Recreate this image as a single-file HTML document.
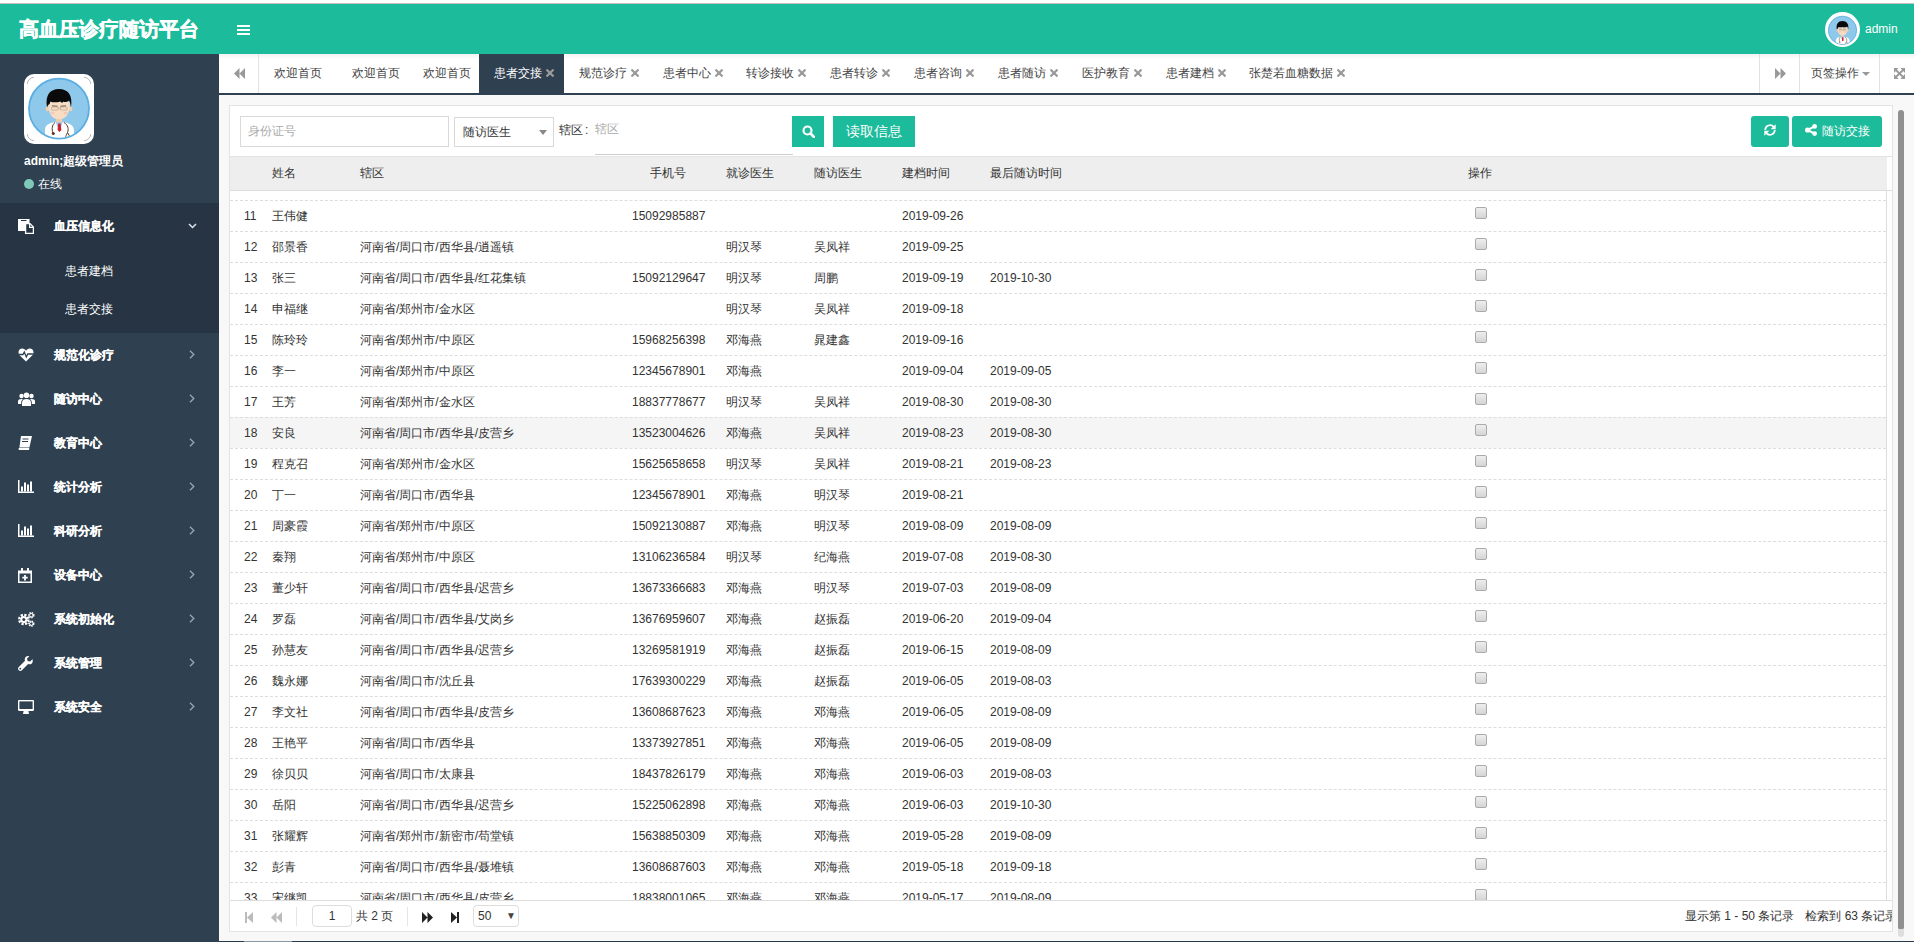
<!DOCTYPE html>
<html><head><meta charset="utf-8">
<style>
*{box-sizing:border-box;margin:0;padding:0}
html,body{width:1914px;height:942px;overflow:hidden;background:#fff;font-family:"Liberation Sans",sans-serif;font-size:12px;color:#333}
.abs{position:absolute}
#topline{position:absolute;left:0;top:3px;width:1914px;height:1px;background:#c9bfbf}
#header{position:absolute;left:0;top:4px;width:1914px;height:50px;background:#1cbb9b}
#title{position:absolute;left:19px;top:10px;font-size:20px;font-weight:bold;-webkit-text-stroke:0.5px #fff;color:#fff;line-height:30px;white-space:nowrap}
#burger{position:absolute;left:237px;top:21px;width:13px;height:10px}
#burger i{position:absolute;left:0;width:13px;height:2px;background:#fff}
#havatar{position:absolute;left:1825px;top:8px;width:35px;height:35px;border-radius:50%;background:#fff;overflow:hidden}
#hname{position:absolute;left:1865px;top:17px;color:#fff;font-size:12px;line-height:16px}

#sidebar{position:absolute;left:0;top:54px;width:219px;height:888px;background:#2f4050}
#avbox{position:absolute;left:24px;top:20px;width:70px;height:70px;border-radius:10px;background:#fff;overflow:hidden}
#uname{position:absolute;left:24px;top:99px;color:#fff;font-weight:bold;font-size:12px;line-height:16px;white-space:nowrap}
#online{position:absolute;left:24px;top:122px;color:#fff;font-size:12px;line-height:16px;white-space:nowrap}
#online i{display:inline-block;width:10px;height:10px;border-radius:50%;background:#7fc9b9;margin-right:4px;vertical-align:-1px}
#m1{position:absolute;left:0;top:149px;width:219px;height:130px;background:#263443}
.mi{position:absolute;left:0;width:219px;height:44px;color:#fff}
.mi .ico{position:absolute;left:18px;top:16px;width:18px;height:16px}
.mi .ico svg{display:block}
.mi .mt{position:absolute;left:54px;top:15px;font-weight:bold;-webkit-text-stroke:0.2px #fff;font-size:12px;line-height:16px;white-space:nowrap}
.mi .arr{position:absolute;left:189px;top:18px}
.sub{position:absolute;left:65px;color:#fff;font-size:12px;line-height:16px;white-space:nowrap}

#tabbar{position:absolute;left:219px;top:54px;width:1695px;height:41px;background:linear-gradient(#fbf3f3 0,#f4f4f4 1px,#fafafa 3px,#fff 5px);border-bottom:2px solid #2f4050}
.tab{position:absolute;top:0;height:39px;line-height:39px;font-size:12px;color:#444;white-space:nowrap}
.tab .x{margin-left:4px;vertical-align:0px}
.tab.act{color:#fff;background:#2f4050;padding:0 10px 0 15px;margin-left:-15px}

.sep{position:absolute;top:0;width:1px;height:39px;background:#e2e2e2}

#content{position:absolute;left:219px;top:95px;width:1695px;height:846px;background:#f8f8f8}
#bottomline{position:absolute;left:219px;top:941px;width:1695px;height:1px;background:#2a3a4a}
#panel{position:absolute;left:229px;top:105px;width:1664px;height:827px;background:#fff;border:1px solid #e3e3e3}
#toolbar{position:absolute;left:0;top:0;width:1662px;height:51px;border-bottom:1px solid #e3e3e3}
.inp{position:absolute;border:1px solid #d9d9d9;background:#fff;font-size:12px;line-height:28px;color:#aaa;padding-left:7px}
.btn{position:absolute;background:#1cbb9b;color:#fff;border-radius:3px;font-size:12px;text-align:center}
#thead{position:absolute;left:0;top:51px;width:1662px;height:34px;border-bottom:1px solid #ddd}
#thead .bg{position:absolute;left:0;top:0;width:1657px;height:33px;background:#eee}
.th{position:absolute;top:8px;font-size:12px;line-height:16px;color:#333;white-space:nowrap}
#tbody{position:absolute;left:0;top:85px;width:1657px;height:709px;overflow:hidden;border-right:1px solid #ddd}
.tr{position:absolute;left:0;width:1656px;height:31px;border-top:1px dashed #ddd}
.tr.hl{background:#f5f5f5}
.tr .c{position:absolute;top:7px;line-height:16px;white-space:nowrap;color:#333}
.cb{position:absolute;left:1245px;top:6px;width:12px;height:12px;border:1px solid #aaa;border-radius:2px;background:linear-gradient(#eee,#d5d5d5)}
#tfoot{position:absolute;left:0;top:794px;width:1662px;height:31px;border-top:1px solid #ddd;overflow:hidden}
#scroll{position:absolute;left:1898px;top:110px;width:6px;height:820px;border-radius:3px;background:#909090}
</style></head>
<body>
<svg width="0" height="0" style="position:absolute"><defs><clipPath id="cc"><circle cx="35" cy="34.6" r="29.1"/></clipPath>
<symbol id="av" viewBox="0 0 70 70">
 <circle cx="35" cy="34.6" r="30" fill="#8ec8ea" stroke="#5aaee2" stroke-width="1.8"/>
 <g clip-path="url(#cc)">
  <path d="M21 70V56C21 51 25 49 31 48.2H39C45 49 49.5 51 50 56V70z" fill="#fff"/>
  <path d="M31.5 47h7.5l-1.8 6h-3.9z" fill="#a9c6ea"/>
  <path d="M34.2 49.5h2.4l0.8 6.5-1.9 2-1.9-2z" fill="#c8202e"/>
  <path d="M31 48.5C28 51 27.5 55 29 59" stroke="#5a3526" fill="none" stroke-width="1"/>
  <circle cx="29.3" cy="59.6" r="1.5" fill="#5a3526"/>
  <path d="M40 48.5C44 51 45 55 43.5 58.5C42.5 61 41.5 62 41.5 64" stroke="#5a3526" fill="none" stroke-width="1"/>
  <path d="M43.5 58.5 45.5 62" stroke="#5a3526" fill="none" stroke-width="1"/>
 </g>
 <rect x="32" y="41" width="6" height="7" fill="#f0c9a8"/>
 <ellipse cx="23.3" cy="35" rx="1.7" ry="2.4" fill="#f3cfb0"/>
 <ellipse cx="46.7" cy="35" rx="1.7" ry="2.4" fill="#f3cfb0"/>
 <path d="M24 28C24 40 28 45.2 35 45.2C42 45.2 46 40 46 28z" fill="#f8dcc3"/>
 <ellipse cx="28.5" cy="39" rx="2" ry="1.2" fill="#f6c6b6"/>
 <ellipse cx="41.5" cy="39" rx="2" ry="1.2" fill="#f6c6b6"/>
 <path d="M23 33.5C21 21 26 15 35 15C44 15 49 21 47 33.5C46.5 30 46 28 45 26.5C43 28 41 28.5 39.5 27.5L38 29 36.5 27.5C33 28.5 29 28.8 26.5 27.5L25.5 30C24.5 30.5 23.5 31.5 23 33.5z" fill="#0a0a0a"/>
 <path d="M27.5 33h6.5v3h-6.5zM36.5 33h6.5v3h-6.5z" fill="none" stroke="#9a8a7a" stroke-width="0.45"/>
 <path d="M34 34.2h2.5" stroke="#9a8a7a" stroke-width="0.45"/><path d="M28 31.8l5.5 0.4M36.5 32.2l5.5-0.4" stroke="#333" stroke-width="0.7"/>
 <path d="M3.3 10A7 7 0 0 1 10 3.3M60 3.3A7 7 0 0 1 66.7 10M66.7 60A7 7 0 0 1 60 66.7M10 66.7A7 7 0 0 1 3.3 60" fill="none" stroke="#888" stroke-width="0.6"/>
</symbol></defs></svg>
<div id="topline"></div>
<div id="header">
  <div id="title">高血压诊疗随访平台</div>
  <div id="burger"><i style="top:0"></i><i style="top:4px"></i><i style="top:8px"></i></div>
  <div id="havatar"><svg style="position:absolute;left:1px;top:1.5px" width="33" height="33" viewBox="0 0 70 70"><use href="#av" width="70" height="70"/></svg></div>
  <div id="hname">admin</div>
</div>

<div id="sidebar">
  <div id="avbox"><svg width="70" height="70" viewBox="0 0 70 70"><use href="#av"/></svg></div>
  <div id="uname">admin;超级管理员</div>
  <div id="online"><i></i>在线</div>
  <div id="m1"></div>
  <div class="mi" style="top:149px"><span class="ico"><svg width="16" height="15" viewBox="0 0 16 15"><path d="M0 0h11.5v4H7v8H0z" fill="#fff"/><path d="M3 1.5h5.5" stroke="#263443" stroke-width="1"/><path d="M7.6 4.6H12l3.4 3.4v6.4H7.6z" fill="#263443" stroke="#fff" stroke-width="1.3"/><path d="M11.6 4.6v3.8h3.8" fill="none" stroke="#fff" stroke-width="1.2"/></svg></span><span class="mt">血压信息化</span><svg style="position:absolute;left:188px;top:20px" width="9" height="6" viewBox="0 0 9 6"><path d="M1 1l3.5 3.5L8 1" fill="none" stroke="#dfe4ea" stroke-width="1.5"/></svg></div>
  <div class="sub" style="top:209px">患者建档</div>
  <div class="sub" style="top:247px">患者交接</div>
<div class="mi" style="top:278px"><span class="ico"><svg width="16" height="14" viewBox="0 0 16 14"><path d="M8 13.5L1.6 7.2C-0.4 5.2 0.3 1 3.8 0.6 5.7 0.4 7 1.5 8 2.7 9 1.5 10.3 0.4 12.2 0.6c3.5 0.4 4.2 4.6 2.2 6.6z" fill="#fff"/><path d="M0.5 6.5h4.5l1.3-2.5 2 5 1.5-3h5.7" fill="none" stroke="#2f4050" stroke-width="1.3"/></svg></span><span class="mt">规范化诊疗</span><svg class="arr" width="6" height="9" viewBox="0 0 6 9"><path d="M1 0.8L4.8 4.5 1 8.2" fill="none" stroke="#98a2ad" stroke-width="1.4"/></svg></div>
<div class="mi" style="top:322px"><span class="ico"><svg width="17" height="14" viewBox="0 0 17 14"><circle cx="8.5" cy="3.2" r="2.8" fill="#fff"/><circle cx="3.5" cy="4" r="2.2" fill="#fff"/><circle cx="13.5" cy="4" r="2.2" fill="#fff"/><path d="M4 14v-3.5C4 8 6 7 8.5 7S13 8 13 10.5V14z" fill="#fff"/><path d="M0 12V9.2C0 7.8 1.5 7 3.5 7 4 7 4.5 7.1 4.8 7.2 3.8 8 3.2 9 3.2 10.5V12zM17 12V9.2C17 7.8 15.5 7 13.5 7 13 7 12.5 7.1 12.2 7.2 13.2 8 13.8 9 13.8 10.5V12z" fill="#fff"/></svg></span><span class="mt">随访中心</span><svg class="arr" width="6" height="9" viewBox="0 0 6 9"><path d="M1 0.8L4.8 4.5 1 8.2" fill="none" stroke="#98a2ad" stroke-width="1.4"/></svg></div>
<div class="mi" style="top:366px"><span class="ico"><svg width="14" height="14" viewBox="0 0 14 14"><path d="M3 0h11l-2.5 11H1.5z" fill="#fff"/><path d="M1.5 11.5h10L11 14H1.5C0.5 14 0.3 13 0.8 12z" fill="#fff"/><path d="M4.5 3h6M4 5.5h6" stroke="#2f4050" stroke-width="1"/></svg></span><span class="mt">教育中心</span><svg class="arr" width="6" height="9" viewBox="0 0 6 9"><path d="M1 0.8L4.8 4.5 1 8.2" fill="none" stroke="#98a2ad" stroke-width="1.4"/></svg></div>
<div class="mi" style="top:410px"><span class="ico"><svg width="16" height="13" viewBox="0 0 16 13"><path d="M0.75 0v12.25H16" fill="none" stroke="#fff" stroke-width="1.5"/><rect x="3" y="6.5" width="2" height="5" fill="#fff"/><rect x="6" y="2.5" width="2" height="9" fill="#fff"/><rect x="9" y="4.5" width="2" height="7" fill="#fff"/><rect x="12" y="1.5" width="2" height="10" fill="#fff"/></svg></span><span class="mt">统计分析</span><svg class="arr" width="6" height="9" viewBox="0 0 6 9"><path d="M1 0.8L4.8 4.5 1 8.2" fill="none" stroke="#98a2ad" stroke-width="1.4"/></svg></div>
<div class="mi" style="top:454px"><span class="ico"><svg width="16" height="13" viewBox="0 0 16 13"><path d="M0.75 0v12.25H16" fill="none" stroke="#fff" stroke-width="1.5"/><rect x="3" y="6.5" width="2" height="5" fill="#fff"/><rect x="6" y="2.5" width="2" height="9" fill="#fff"/><rect x="9" y="4.5" width="2" height="7" fill="#fff"/><rect x="12" y="1.5" width="2" height="10" fill="#fff"/></svg></span><span class="mt">科研分析</span><svg class="arr" width="6" height="9" viewBox="0 0 6 9"><path d="M1 0.8L4.8 4.5 1 8.2" fill="none" stroke="#98a2ad" stroke-width="1.4"/></svg></div>
<div class="mi" style="top:498px"><span class="ico"><svg width="14" height="15" viewBox="0 0 14 15"><path d="M0 2.5h14V15H0z" fill="#fff"/><rect x="1.5" y="5.5" width="11" height="8" fill="#2f4050"/><rect x="3" y="0" width="2" height="3.5" fill="#fff"/><rect x="9" y="0" width="2" height="3.5" fill="#fff"/><path d="M7 7v5.5M4.3 9.7h5.4" stroke="#fff" stroke-width="1.8"/></svg></span><span class="mt">设备中心</span><svg class="arr" width="6" height="9" viewBox="0 0 6 9"><path d="M1 0.8L4.8 4.5 1 8.2" fill="none" stroke="#98a2ad" stroke-width="1.4"/></svg></div>
<div class="mi" style="top:542px"><span class="ico"><svg width="17" height="15" viewBox="0 0 17 15"><circle cx="5.8" cy="7.5" r="4.6" fill="none" stroke="#fff" stroke-width="2.4" stroke-dasharray="2.2 1.4"/><circle cx="5.8" cy="7.5" r="3.6" fill="#fff"/><circle cx="5.8" cy="7.5" r="1.5" fill="#2f4050"/><circle cx="13.3" cy="3.2" r="2.4" fill="none" stroke="#fff" stroke-width="1.6" stroke-dasharray="1.3 0.8"/><circle cx="13.3" cy="3.2" r="1.7" fill="none" stroke="#fff" stroke-width="1"/><circle cx="13.3" cy="11.6" r="2.4" fill="none" stroke="#fff" stroke-width="1.6" stroke-dasharray="1.3 0.8"/><circle cx="13.3" cy="11.6" r="1.7" fill="none" stroke="#fff" stroke-width="1"/></svg></span><span class="mt">系统初始化</span><svg class="arr" width="6" height="9" viewBox="0 0 6 9"><path d="M1 0.8L4.8 4.5 1 8.2" fill="none" stroke="#98a2ad" stroke-width="1.4"/></svg></div>
<div class="mi" style="top:586px"><span class="ico"><svg width="15" height="15" viewBox="0 0 15 15"><path d="M14.5 3.3 12 5.6 9.6 5 9 2.6 11.3 0.2C9.3-0.4 7 0.7 6.8 3c-0.1 0.8 0 1.3 0.2 1.8L0.8 11c-1 1-1 2.3 0 3.2 0.9 0.9 2.2 0.9 3.1 0l6.2-6.2c2.7 1.1 5.5-0.9 4.4-4.7z" fill="#fff"/><circle cx="2.3" cy="12.7" r="0.9" fill="#2f4050"/></svg></span><span class="mt">系统管理</span><svg class="arr" width="6" height="9" viewBox="0 0 6 9"><path d="M1 0.8L4.8 4.5 1 8.2" fill="none" stroke="#98a2ad" stroke-width="1.4"/></svg></div>
<div class="mi" style="top:630px"><span class="ico"><svg width="16" height="14" viewBox="0 0 16 14"><path d="M1.2 0h13.6C15.5 0 16 0.5 16 1.2v8.6c0 0.7-0.5 1.2-1.2 1.2H1.2C0.5 11 0 10.5 0 9.8V1.2C0 0.5 0.5 0 1.2 0z" fill="#fff"/><rect x="1.4" y="1.4" width="13.2" height="7.6" fill="#2f4050"/><path d="M5 14h6l-0.6-3H5.6z" fill="#fff"/></svg></span><span class="mt">系统安全</span><svg class="arr" width="6" height="9" viewBox="0 0 6 9"><path d="M1 0.8L4.8 4.5 1 8.2" fill="none" stroke="#98a2ad" stroke-width="1.4"/></svg></div>

</div>

<div id="tabbar">
  <div class="abs" style="left:15px;top:14px"><svg width="11" height="11" viewBox="0 0 11 11"><path d="M5.5 0v11L0 5.5zM11 0v11L5.5 5.5z" fill="#999"/></svg></div>
  <div class="sep" style="left:39px"></div>
  <span class="tab" style="left:55px">欢迎首页</span><span class="tab" style="left:133px">欢迎首页</span><span class="tab" style="left:204px">欢迎首页</span><span class="tab act" style="left:275px">患者交接<svg class="x" width="8" height="8" viewBox="0 0 8 8"><path d="M1.2 1.2l5.6 5.6M6.8 1.2l-5.6 5.6" stroke="#9a9a9a" stroke-width="2.3" stroke-linecap="round"/></svg></span><span class="tab" style="left:360px">规范诊疗<svg class="x" width="8" height="8" viewBox="0 0 8 8"><path d="M1.2 1.2l5.6 5.6M6.8 1.2l-5.6 5.6" stroke="#9a9a9a" stroke-width="2.3" stroke-linecap="round"/></svg></span><span class="tab" style="left:444px">患者中心<svg class="x" width="8" height="8" viewBox="0 0 8 8"><path d="M1.2 1.2l5.6 5.6M6.8 1.2l-5.6 5.6" stroke="#9a9a9a" stroke-width="2.3" stroke-linecap="round"/></svg></span><span class="tab" style="left:527px">转诊接收<svg class="x" width="8" height="8" viewBox="0 0 8 8"><path d="M1.2 1.2l5.6 5.6M6.8 1.2l-5.6 5.6" stroke="#9a9a9a" stroke-width="2.3" stroke-linecap="round"/></svg></span><span class="tab" style="left:611px">患者转诊<svg class="x" width="8" height="8" viewBox="0 0 8 8"><path d="M1.2 1.2l5.6 5.6M6.8 1.2l-5.6 5.6" stroke="#9a9a9a" stroke-width="2.3" stroke-linecap="round"/></svg></span><span class="tab" style="left:695px">患者咨询<svg class="x" width="8" height="8" viewBox="0 0 8 8"><path d="M1.2 1.2l5.6 5.6M6.8 1.2l-5.6 5.6" stroke="#9a9a9a" stroke-width="2.3" stroke-linecap="round"/></svg></span><span class="tab" style="left:779px">患者随访<svg class="x" width="8" height="8" viewBox="0 0 8 8"><path d="M1.2 1.2l5.6 5.6M6.8 1.2l-5.6 5.6" stroke="#9a9a9a" stroke-width="2.3" stroke-linecap="round"/></svg></span><span class="tab" style="left:863px">医护教育<svg class="x" width="8" height="8" viewBox="0 0 8 8"><path d="M1.2 1.2l5.6 5.6M6.8 1.2l-5.6 5.6" stroke="#9a9a9a" stroke-width="2.3" stroke-linecap="round"/></svg></span><span class="tab" style="left:947px">患者建档<svg class="x" width="8" height="8" viewBox="0 0 8 8"><path d="M1.2 1.2l5.6 5.6M6.8 1.2l-5.6 5.6" stroke="#9a9a9a" stroke-width="2.3" stroke-linecap="round"/></svg></span><span class="tab" style="left:1030px">张楚若血糖数据<svg class="x" width="8" height="8" viewBox="0 0 8 8"><path d="M1.2 1.2l5.6 5.6M6.8 1.2l-5.6 5.6" stroke="#9a9a9a" stroke-width="2.3" stroke-linecap="round"/></svg></span>
  <div class="sep" style="left:1540px"></div>
  <div class="abs" style="left:1556px;top:14px"><svg width="11" height="11" viewBox="0 0 11 11"><path d="M0 0v11L5.5 5.5zM5.5 0v11L11 5.5z" fill="#999"/></svg></div>
  <div class="sep" style="left:1580px"></div>
  <div class="tab" style="left:1592px">页签操作<span style="display:inline-block;margin-left:3px;width:0;height:0;border-left:4px solid transparent;border-right:4px solid transparent;border-top:4px solid #999;vertical-align:1px"></span></div>
  <div class="sep" style="left:1660px"></div>
  <div class="abs" style="left:1675px;top:14px"><svg width="11" height="11" viewBox="0 0 12 11" preserveAspectRatio="none" fill="#9a9a9a"><path d="M0 0h5L0 5zM12 0v5L7 0zM0 11V6l5 5zM12 11H7l5-5z"/><path d="M1.5 1.5L10.5 9.5M10.5 1.5L1.5 9.5" stroke="#9a9a9a" stroke-width="2.2"/></svg></div>
</div>

<div id="content"></div>
<div id="bottomline"></div>
<div id="panel">
  <div id="toolbar">
    <div class="inp" style="left:10px;top:10px;width:209px;height:31px">身份证号</div>
    <div class="inp" style="left:224px;top:11px;width:100px;height:30px;color:#333;padding-left:8px;line-height:29px">随访医生<span style="position:absolute;left:84px;top:12px;width:0;height:0;border-left:4px solid transparent;border-right:4px solid transparent;border-top:5px solid #888"></span></div>
    <div class="abs" style="left:329px;top:16px;line-height:16px;color:#333">辖区<span style="margin-left:2px">:</span></div>
    <div class="abs" style="left:365px;top:15px;line-height:16px;color:#aaa">辖区</div>
    <div class="abs" style="left:365px;top:48px;width:198px;height:1px;background:#ccc"></div>
    <div class="btn" style="left:562px;top:10px;width:32px;height:31px;border-radius:0"><svg style="margin-top:9px" width="13" height="13" viewBox="0 0 13 13"><circle cx="5.5" cy="5.5" r="4" fill="none" stroke="#fff" stroke-width="2.2"/><path d="M8.5 8.5l3.5 3.5" stroke="#fff" stroke-width="2.6" stroke-linecap="round"/></svg></div>
    <div class="btn" style="left:603px;top:10px;width:82px;height:31px;line-height:31px;border-radius:0;font-size:14px">读取信息</div>
    <div class="btn" style="left:1521px;top:10px;width:38px;height:31px"><svg style="position:absolute;left:13px;top:8px" width="12" height="12" viewBox="0 0 12 12"><path d="M1.2 6A4.8 4.8 0 0 1 9.7 2.9" fill="none" stroke="#fff" stroke-width="1.7"/><path d="M11.7 0.2V5.2H6.7z" fill="#fff"/><path d="M10.8 6A4.8 4.8 0 0 1 2.3 9.1" fill="none" stroke="#fff" stroke-width="1.7"/><path d="M0.3 11.8V6.8H5.3z" fill="#fff"/></svg></div>
    <div class="btn" style="left:1562px;top:10px;width:90px;height:31px;line-height:31px"><svg style="vertical-align:-1px;margin-right:5px" width="12" height="12" viewBox="0 0 12 12"><circle cx="9.6" cy="2.4" r="2.4" fill="#fff"/><circle cx="2.6" cy="6" r="2.6" fill="#fff"/><circle cx="9.6" cy="9.6" r="2.4" fill="#fff"/><path d="M2.6 6 9.6 2.4M2.6 6 9.6 9.6" stroke="#fff" stroke-width="2"/></svg>随访交接</div>
  </div>
  <div id="thead"><div class="bg"></div>
    <span class="th" style="left:42px">姓名</span>
    <span class="th" style="left:130px">辖区</span>
    <span class="th" style="left:420px">手机号</span>
    <span class="th" style="left:496px">就诊医生</span>
    <span class="th" style="left:584px">随访医生</span>
    <span class="th" style="left:672px">建档时间</span>
    <span class="th" style="left:760px">最后随访时间</span>
    <span class="th" style="left:1238px">操作</span>
  </div>
  <div id="tbody">
<div class="tr" style="top:9px"><span class="c" style="left:14px">11</span><span class="c" style="left:42px">王伟健</span><span class="c" style="left:402px">15092985887</span><span class="c" style="left:672px">2019-09-26</span><i class="cb"></i></div>
<div class="tr" style="top:40px"><span class="c" style="left:14px">12</span><span class="c" style="left:42px">邵景香</span><span class="c" style="left:130px">河南省/周口市/西华县/逍遥镇</span><span class="c" style="left:496px">明汉琴</span><span class="c" style="left:584px">吴凤祥</span><span class="c" style="left:672px">2019-09-25</span><i class="cb"></i></div>
<div class="tr" style="top:71px"><span class="c" style="left:14px">13</span><span class="c" style="left:42px">张三</span><span class="c" style="left:130px">河南省/周口市/西华县/红花集镇</span><span class="c" style="left:402px">15092129647</span><span class="c" style="left:496px">明汉琴</span><span class="c" style="left:584px">周鹏</span><span class="c" style="left:672px">2019-09-19</span><span class="c" style="left:760px">2019-10-30</span><i class="cb"></i></div>
<div class="tr" style="top:102px"><span class="c" style="left:14px">14</span><span class="c" style="left:42px">申福继</span><span class="c" style="left:130px">河南省/郑州市/金水区</span><span class="c" style="left:496px">明汉琴</span><span class="c" style="left:584px">吴凤祥</span><span class="c" style="left:672px">2019-09-18</span><i class="cb"></i></div>
<div class="tr" style="top:133px"><span class="c" style="left:14px">15</span><span class="c" style="left:42px">陈玲玲</span><span class="c" style="left:130px">河南省/郑州市/中原区</span><span class="c" style="left:402px">15968256398</span><span class="c" style="left:496px">邓海燕</span><span class="c" style="left:584px">晁建鑫</span><span class="c" style="left:672px">2019-09-16</span><i class="cb"></i></div>
<div class="tr" style="top:164px"><span class="c" style="left:14px">16</span><span class="c" style="left:42px">李一</span><span class="c" style="left:130px">河南省/郑州市/中原区</span><span class="c" style="left:402px">12345678901</span><span class="c" style="left:496px">邓海燕</span><span class="c" style="left:672px">2019-09-04</span><span class="c" style="left:760px">2019-09-05</span><i class="cb"></i></div>
<div class="tr" style="top:195px"><span class="c" style="left:14px">17</span><span class="c" style="left:42px">王芳</span><span class="c" style="left:130px">河南省/郑州市/金水区</span><span class="c" style="left:402px">18837778677</span><span class="c" style="left:496px">明汉琴</span><span class="c" style="left:584px">吴凤祥</span><span class="c" style="left:672px">2019-08-30</span><span class="c" style="left:760px">2019-08-30</span><i class="cb"></i></div>
<div class="tr hl" style="top:226px"><span class="c" style="left:14px">18</span><span class="c" style="left:42px">安良</span><span class="c" style="left:130px">河南省/周口市/西华县/皮营乡</span><span class="c" style="left:402px">13523004626</span><span class="c" style="left:496px">邓海燕</span><span class="c" style="left:584px">吴凤祥</span><span class="c" style="left:672px">2019-08-23</span><span class="c" style="left:760px">2019-08-30</span><i class="cb"></i></div>
<div class="tr" style="top:257px"><span class="c" style="left:14px">19</span><span class="c" style="left:42px">程克召</span><span class="c" style="left:130px">河南省/郑州市/金水区</span><span class="c" style="left:402px">15625658658</span><span class="c" style="left:496px">明汉琴</span><span class="c" style="left:584px">吴凤祥</span><span class="c" style="left:672px">2019-08-21</span><span class="c" style="left:760px">2019-08-23</span><i class="cb"></i></div>
<div class="tr" style="top:288px"><span class="c" style="left:14px">20</span><span class="c" style="left:42px">丁一</span><span class="c" style="left:130px">河南省/周口市/西华县</span><span class="c" style="left:402px">12345678901</span><span class="c" style="left:496px">邓海燕</span><span class="c" style="left:584px">明汉琴</span><span class="c" style="left:672px">2019-08-21</span><i class="cb"></i></div>
<div class="tr" style="top:319px"><span class="c" style="left:14px">21</span><span class="c" style="left:42px">周豪霞</span><span class="c" style="left:130px">河南省/郑州市/中原区</span><span class="c" style="left:402px">15092130887</span><span class="c" style="left:496px">邓海燕</span><span class="c" style="left:584px">明汉琴</span><span class="c" style="left:672px">2019-08-09</span><span class="c" style="left:760px">2019-08-09</span><i class="cb"></i></div>
<div class="tr" style="top:350px"><span class="c" style="left:14px">22</span><span class="c" style="left:42px">秦翔</span><span class="c" style="left:130px">河南省/郑州市/中原区</span><span class="c" style="left:402px">13106236584</span><span class="c" style="left:496px">明汉琴</span><span class="c" style="left:584px">纪海燕</span><span class="c" style="left:672px">2019-07-08</span><span class="c" style="left:760px">2019-08-30</span><i class="cb"></i></div>
<div class="tr" style="top:381px"><span class="c" style="left:14px">23</span><span class="c" style="left:42px">董少轩</span><span class="c" style="left:130px">河南省/周口市/西华县/迟营乡</span><span class="c" style="left:402px">13673366683</span><span class="c" style="left:496px">邓海燕</span><span class="c" style="left:584px">明汉琴</span><span class="c" style="left:672px">2019-07-03</span><span class="c" style="left:760px">2019-08-09</span><i class="cb"></i></div>
<div class="tr" style="top:412px"><span class="c" style="left:14px">24</span><span class="c" style="left:42px">罗磊</span><span class="c" style="left:130px">河南省/周口市/西华县/艾岗乡</span><span class="c" style="left:402px">13676959607</span><span class="c" style="left:496px">邓海燕</span><span class="c" style="left:584px">赵振磊</span><span class="c" style="left:672px">2019-06-20</span><span class="c" style="left:760px">2019-09-04</span><i class="cb"></i></div>
<div class="tr" style="top:443px"><span class="c" style="left:14px">25</span><span class="c" style="left:42px">孙慧友</span><span class="c" style="left:130px">河南省/周口市/西华县/迟营乡</span><span class="c" style="left:402px">13269581919</span><span class="c" style="left:496px">邓海燕</span><span class="c" style="left:584px">赵振磊</span><span class="c" style="left:672px">2019-06-15</span><span class="c" style="left:760px">2019-08-09</span><i class="cb"></i></div>
<div class="tr" style="top:474px"><span class="c" style="left:14px">26</span><span class="c" style="left:42px">魏永娜</span><span class="c" style="left:130px">河南省/周口市/沈丘县</span><span class="c" style="left:402px">17639300229</span><span class="c" style="left:496px">邓海燕</span><span class="c" style="left:584px">赵振磊</span><span class="c" style="left:672px">2019-06-05</span><span class="c" style="left:760px">2019-08-03</span><i class="cb"></i></div>
<div class="tr" style="top:505px"><span class="c" style="left:14px">27</span><span class="c" style="left:42px">李文社</span><span class="c" style="left:130px">河南省/周口市/西华县/皮营乡</span><span class="c" style="left:402px">13608687623</span><span class="c" style="left:496px">邓海燕</span><span class="c" style="left:584px">邓海燕</span><span class="c" style="left:672px">2019-06-05</span><span class="c" style="left:760px">2019-08-09</span><i class="cb"></i></div>
<div class="tr" style="top:536px"><span class="c" style="left:14px">28</span><span class="c" style="left:42px">王艳平</span><span class="c" style="left:130px">河南省/周口市/西华县</span><span class="c" style="left:402px">13373927851</span><span class="c" style="left:496px">邓海燕</span><span class="c" style="left:584px">邓海燕</span><span class="c" style="left:672px">2019-06-05</span><span class="c" style="left:760px">2019-08-09</span><i class="cb"></i></div>
<div class="tr" style="top:567px"><span class="c" style="left:14px">29</span><span class="c" style="left:42px">徐贝贝</span><span class="c" style="left:130px">河南省/周口市/太康县</span><span class="c" style="left:402px">18437826179</span><span class="c" style="left:496px">邓海燕</span><span class="c" style="left:584px">邓海燕</span><span class="c" style="left:672px">2019-06-03</span><span class="c" style="left:760px">2019-08-03</span><i class="cb"></i></div>
<div class="tr" style="top:598px"><span class="c" style="left:14px">30</span><span class="c" style="left:42px">岳阳</span><span class="c" style="left:130px">河南省/周口市/西华县/迟营乡</span><span class="c" style="left:402px">15225062898</span><span class="c" style="left:496px">邓海燕</span><span class="c" style="left:584px">邓海燕</span><span class="c" style="left:672px">2019-06-03</span><span class="c" style="left:760px">2019-10-30</span><i class="cb"></i></div>
<div class="tr" style="top:629px"><span class="c" style="left:14px">31</span><span class="c" style="left:42px">张耀辉</span><span class="c" style="left:130px">河南省/郑州市/新密市/苟堂镇</span><span class="c" style="left:402px">15638850309</span><span class="c" style="left:496px">邓海燕</span><span class="c" style="left:584px">邓海燕</span><span class="c" style="left:672px">2019-05-28</span><span class="c" style="left:760px">2019-08-09</span><i class="cb"></i></div>
<div class="tr" style="top:660px"><span class="c" style="left:14px">32</span><span class="c" style="left:42px">彭青</span><span class="c" style="left:130px">河南省/周口市/西华县/聂堆镇</span><span class="c" style="left:402px">13608687603</span><span class="c" style="left:496px">邓海燕</span><span class="c" style="left:584px">邓海燕</span><span class="c" style="left:672px">2019-05-18</span><span class="c" style="left:760px">2019-09-18</span><i class="cb"></i></div>
<div class="tr" style="top:691px"><span class="c" style="left:14px">33</span><span class="c" style="left:42px">宋继凯</span><span class="c" style="left:130px">河南省/周口市/西华县/皮营乡</span><span class="c" style="left:402px">18838001065</span><span class="c" style="left:496px">邓海燕</span><span class="c" style="left:584px">邓海燕</span><span class="c" style="left:672px">2019-05-17</span><span class="c" style="left:760px">2019-08-09</span><i class="cb"></i></div>
  </div>
  <div id="tfoot">
    <div class="abs" style="left:15px;top:11px"><svg width="8" height="11" viewBox="0 0 8 11" fill="#bbb"><rect x="0" y="0" width="2" height="11"/><path d="M8 0v11L2 5.5z"/></svg></div>
    <div class="abs" style="left:41px;top:11px"><svg width="11" height="11" viewBox="0 0 11 11" fill="#bbb"><path d="M5.5 0v11L0 5.5zM11 0v11L5.5 5.5z"/></svg></div>
    <div class="abs" style="left:66px;top:6px;width:1px;height:19px;background:#e5e5e5"></div>
    <div class="abs" style="left:82px;top:4px;width:40px;height:22px;border:1px solid #ddd;border-radius:4px;text-align:center;line-height:20px;color:#333">1</div>
    <div class="abs" style="left:126px;top:7px;line-height:16px;color:#333">共 2 页</div>
    <div class="abs" style="left:177px;top:6px;width:1px;height:19px;background:#e5e5e5"></div>
    <div class="abs" style="left:192px;top:11px"><svg width="11" height="11" viewBox="0 0 11 11" fill="#222"><path d="M0 0v11L5.5 5.5zM5.5 0v11L11 5.5z"/></svg></div>
    <div class="abs" style="left:221px;top:11px"><svg width="8" height="11" viewBox="0 0 8 11" fill="#222"><path d="M0 0v11L6 5.5z"/><rect x="6" y="0" width="2" height="11"/></svg></div>
    <div class="abs" style="left:243px;top:4px;width:46px;height:22px;border:1px solid #ddd;border-radius:4px;line-height:20px;color:#333;padding-left:4px">50<span style="position:absolute;left:32px;top:0;font-size:10px;color:#444">&#9660;</span></div>
    <div class="abs" style="left:1455px;top:7px;line-height:16px;color:#333;white-space:nowrap">显示第 1 - 50 条记录<span style="margin-left:11px">检索到 63 条记录</span></div>
  </div>
</div>
<div id="scroll"></div><div class="abs" style="left:1898px;top:929px;width:6px;height:8px;background:#dedede;border-radius:0 0 3px 3px"></div><div class="abs" style="left:244px;top:941px;width:48px;height:1px;background:#8a96a2"></div>
</body></html>
